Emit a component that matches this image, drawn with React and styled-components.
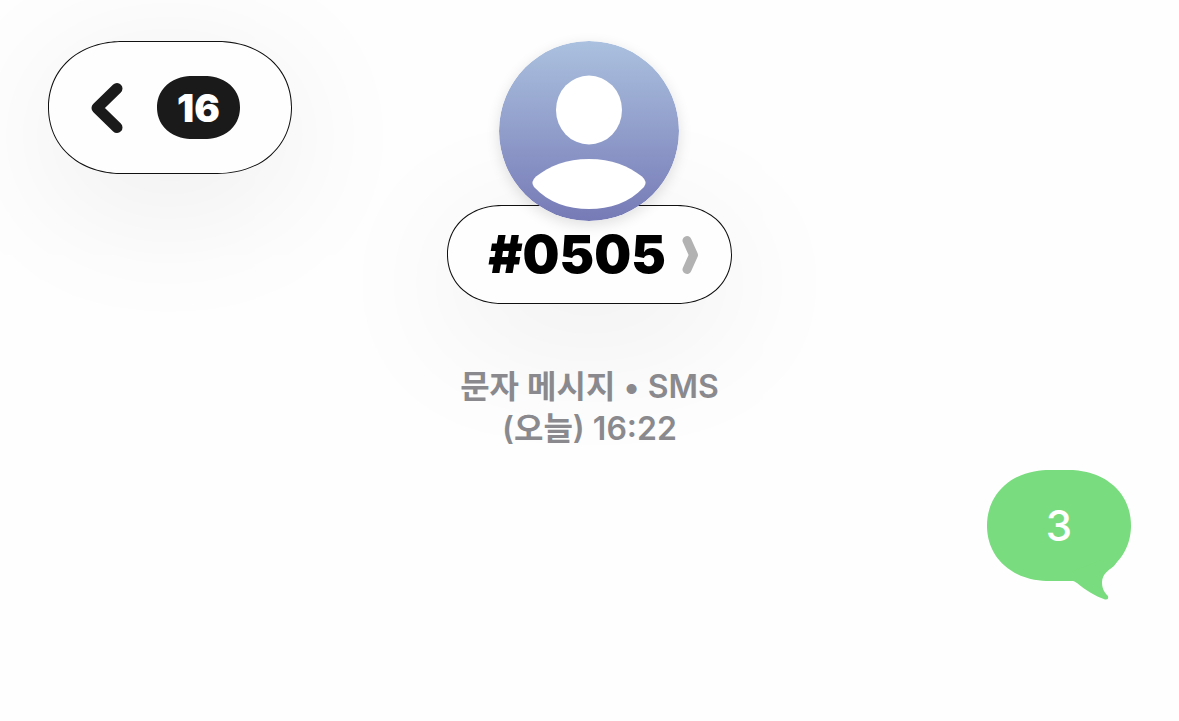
import React from "react";
import styled, { createGlobalStyle } from "styled-components";

const App = () => {
  return (
    <>
      <GlobalStyle />
      <Wrapper>
        <Header>
          <BackButton type="button" aria-label="Back, 16 unread">
            <svg width="32" height="50" viewBox="0 0 32 50" aria-hidden="true">
              <path d="M26 5.5 6 25 26 44.5" stroke="#1a1a1a" strokeWidth="11" />
            </svg>
            <Badge>16</Badge>
          </BackButton>
          <Contact>
            <Avatar />
            <ContactButton type="button">
              #0505
              <svg width="18" height="40" viewBox="0 0 18 40" aria-hidden="true">
                <path d="M5 5.5 11.5 20 5 34.5" stroke="#b2b2b2" strokeWidth="9" />
              </svg>
            </ContactButton>
          </Contact>
        </Header>
        <Thread>
          <Meta>
            문자 메시지 • SMS
            <br />
            (오늘) 16:22
          </Meta>
          <Bubble>
            3
            <Tail />
          </Bubble>
        </Thread>
      </Wrapper>
    </>
  );
};

const Avatar = () => (
  <AvatarSvg width="180" height="180" viewBox="0 0 180 180" aria-hidden="true">
    <defs>
      <linearGradient id="avatar" x1="0" y1="0" x2="0" y2="1">
        <stop offset="0" stopColor="#abc1df" />
        <stop offset="1" stopColor="#767ab6" />
      </linearGradient>
    </defs>
    <circle cx="90" cy="90" r="90" fill="url(#avatar)" />
    <ellipse cx="90" cy="69" rx="33" ry="34.5" fill="#fff" />
    <path
      d="M90 118C113 118 129 125 143 135.5Q149 141 145 146C130 162 111 168 90 168C69 168 50 162 35 146Q31 141 37 135.5C51 125 67 118 90 118Z"
      fill="#fff"
    />
  </AvatarSvg>
);

const Tail = () => (
  <TailSvg width="60" height="42" viewBox="0 0 60 42" aria-hidden="true">
    <path
      d="M0 12V20.500Q3 20.500 6 23C14 30 24 36 34 39.500Q38 40 37 36C32 31 31 27 31 22C31.500 14 37 10.500 43 6L47 0H30Z"
      fill="#79dc7e"
    />
  </TailSvg>
);

const GlobalStyle = createGlobalStyle`
  * {
    box-sizing: border-box;
  }
  body {
    margin: 0;
    background: #fefefe;
    font-family: Inter, "Noto Sans CJK KR", sans-serif;
  }
  button {
    font-family: inherit;
  }
`;

const Wrapper = styled.main`
  padding: 41px 48px;
`;

const Header = styled.header`
  display: grid;
  grid-template-columns: 1fr auto 1fr;
  align-items: start;
`;

const Pill = styled.button`
  display: flex;
  align-items: center;
  border: 1px solid #111;
  background: #fefefe;
  box-shadow: 0 28px 144px rgba(0, 0, 0, 0.08);
  cursor: pointer;
  corner-shape: superellipse(1.08);

  path {
    fill: none;
    stroke-linecap: round;
    stroke-linejoin: round;
  }
`;

const BackButton = styled(Pill)`
  justify-self: start;
  gap: 34px;
  height: 133px;
  padding: 0 51px 0 42px;
  border-radius: 75px / 67px;
`;

const Badge = styled.span`
  display: grid;
  place-items: center;
  width: 83px;
  height: 63px;
  border-radius: 36px / 32px;
  corner-shape: superellipse(1.08);
  background: #1a1a1a;
  color: #fff;
  font-size: 38px;
  font-weight: 900;
`;

const Contact = styled.div`
  display: flex;
  flex-direction: column;
  align-items: center;
`;

const AvatarSvg = styled.svg`
  z-index: 1;
  margin-bottom: -16px;
  border-radius: 50%;
  box-shadow: 0 4px 14px rgba(0, 0, 0, 0.12);
`;

const ContactButton = styled(Pill)`
  gap: 16px;
  height: 99px;
  padding: 0 31px 0 40px;
  border-radius: 56px / 50px;
  color: #000;
  font-size: 52px;
  font-weight: 900;
`;

const Thread = styled.section`
  display: flex;
  flex-direction: column;
  gap: 20px;
  padding-top: 62px;
`;

const Meta = styled.p`
  position: relative;
  margin: 0;
  color: #8a8a8e;
  font-size: 32px;
  font-weight: 600;
  line-height: 42px;
  text-align: center;
`;

const Bubble = styled.div`
  position: relative;
  display: grid;
  place-items: center;
  align-self: flex-end;
  width: 144px;
  height: 111px;
  border-radius: 63px / 56px;
  corner-shape: superellipse(1.08);
  background: #79dc7e;
  color: #fff;
  font-size: 42px;
  font-weight: 500;
`;

const TailSvg = styled.svg`
  position: absolute;
  right: 0;
  bottom: -21px;
`;

export default App;
